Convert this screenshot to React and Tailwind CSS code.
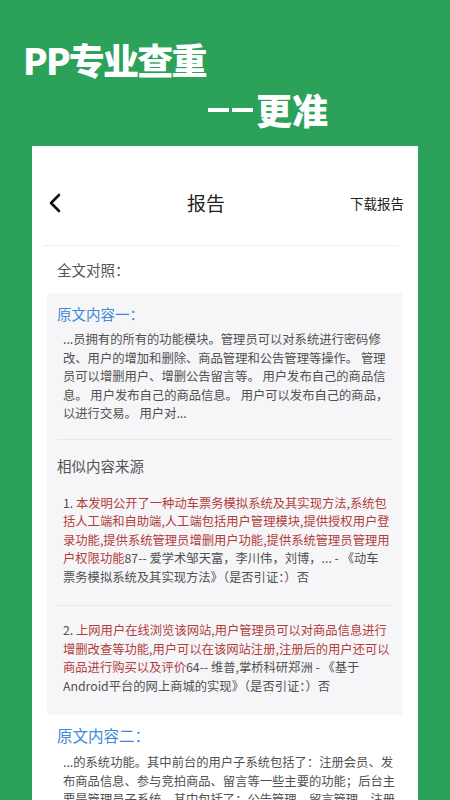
import React from "react";

function Red({ children }) {
  return <span className="text-[#b33c3c]">{children}</span>;
}

export default function App() {
  return (
    <div className="w-[450px] h-[800px] overflow-hidden bg-[#2ba159] font-['Noto_Sans_CJK_SC','Noto_Sans',sans-serif]">
      {/* Headline */}
      <div className="pt-[35px] pl-[23px] text-white font-black text-[36px] leading-[48px] tracking-[-1.8px]">
        PP专业查重
      </div>
      <div className="flex items-center pl-[208px] h-[52px] text-white font-black">
        <span className="inline-block w-[21px] h-[4px] bg-white mt-[2px]" />
        <span className="inline-block w-[21px] h-[4px] bg-white mt-[2px] ml-[3px]" />
        <span className="text-[36px] leading-none ml-[3px]">更准</span>
      </div>

      {/* Card */}
      <div className="ml-[32px] mt-[11px] w-[386px] h-[700px] bg-white pt-[29px]">
        <div className="h-[56px] flex items-center">
          <div className="pl-[16px]">
            <svg width="14" height="20" viewBox="0 0 14 20">
              <polyline points="11,2 3,10 11,18" fill="none" stroke="#111" strokeWidth="2.6" strokeLinecap="round" strokeLinejoin="round" />
            </svg>
          </div>
          <div className="flex-1 text-center text-[19px] text-[#222]">报告</div>
          <div className="pr-[14px] text-[13.5px] text-[#222]">下载报告</div>
        </div>
        <div className="mt-[14px] ml-[11px] mr-[20px] h-px bg-[#efefef]" />

        <div className="pl-[25px] mt-[14px] text-[14.5px] leading-[20px] text-[#555]">全文对照：</div>

        <div className="mt-[13px] ml-[15px] mr-[16px] bg-[#f6f6f8] rounded-[2px] pt-[11px] pb-[20px] shadow-[0_0_2px_rgba(0,0,0,0.04)]">
          <div className="pl-[10px] text-[14.5px] leading-[20px] text-[#3b8bd6]">原文内容一：</div>
          <div className="pl-[16px] mt-[6px] text-[12.3px] leading-[18.5px] text-[#505050] whitespace-nowrap">
            ...员拥有的所有的功能模块。管理员可以对系统进行密码修<br />
            改、用户的增加和删除、商品管理和公告管理等操作。 管理<br />
            员可以增删用户、增删公告留言等。 用户发布自己的商品信<br />
            息。 用户发布自己的商品信息。 用户可以发布自己的商品，<br />
            以进行交易。 用户对...
          </div>
          <div className="mt-[16px] mx-[10px] h-px bg-[#e6e6e6]" />
          <div className="pl-[10px] mt-[16px] text-[14.5px] leading-[20px] text-[#555]">相似内容来源</div>
          <div className="pl-[16px] mt-[18px] text-[12.3px] leading-[18.5px] text-[#505050] whitespace-nowrap">
            1. <Red>本发明公开了一种动车票务模拟系统及其实现方法,系统包</Red><br />
            <Red>括人工端和自助端,人工端包括用户管理模块,提供授权用户登</Red><br />
            <Red>录功能,提供系统管理员增删用户功能,提供系统管理员管理用</Red><br />
            <Red>户权限功能</Red>87-- 爱学术邹天富，李川伟，刘博，... - 《动车<br />
            票务模拟系统及其实现方法》（是否引证：）否
          </div>
          <div className="mt-[19px] mx-[10px] h-px bg-[#e6e6e6]" />
          <div className="pl-[16px] mt-[15px] text-[12.3px] leading-[18.5px] text-[#505050] whitespace-nowrap">
            2. <Red>上网用户在线浏览该网站,用户管理员可以对商品信息进行</Red><br />
            <Red>增删改查等功能,用户可以在该网站注册,注册后的用户还可以</Red><br />
            <Red>商品进行购买以及评价</Red>64-- 维普,掌桥科研郑洲 - 《基于<br />
            Android平台的网上商城的实现》（是否引证：）否
          </div>
        </div>

        <div className="pl-[25px] mt-[10px] text-[15.5px] leading-[20px] text-[#3b8bd6]">原文内容二：</div>
        <div className="pl-[31px] mt-[8px] text-[12.3px] leading-[18.5px] text-[#505050] whitespace-nowrap">
          ...的系统功能。其中前台的用户子系统包括了：注册会员、发<br />
          布商品信息、参与竞拍商品、留言等一些主要的功能；后台主<br />
          要是管理员子系统，其中包括了：公告管理、留言管理、注册
        </div>
      </div>
    </div>
  );
}
